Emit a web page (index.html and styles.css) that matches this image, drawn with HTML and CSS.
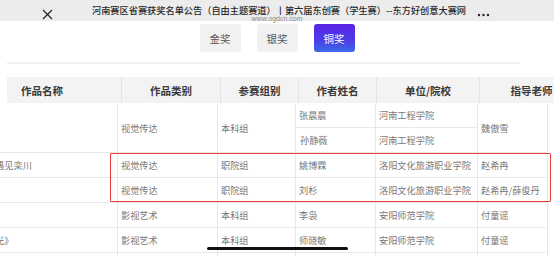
FILE: index.html
```html
<!DOCTYPE html>
<html lang="zh-CN">
<head>
<meta charset="utf-8">
<title>获奖名单</title>
<link rel="stylesheet" href="styles.css">
</head>
<body>
<header class="topbar">
  <span class="close">
    <svg width="11" height="11" viewBox="0 0 11 11"><path d="M1 1L10 10M10 1L1 10" stroke="#222" stroke-width="1.2" fill="none"/></svg>
  </span>
  <h1 class="title">河南赛区省赛获奖名单公告（自由主题赛道）丨第六届东创赛（学生赛）--东方好创意大赛网</h1>
  <span class="more">
    <svg width="13" height="4" viewBox="0 0 13 4"><circle cx="2" cy="2" r="1.2" fill="#222"/><circle cx="6.5" cy="2" r="1.2" fill="#222"/><circle cx="11" cy="2" r="1.2" fill="#222"/></svg>
  </span>
  <span class="url">www.ogdcn.com</span>
</header>

<nav class="tabs">
  <button class="tab">金奖</button>
  <button class="tab">银奖</button>
  <button class="tab active">铜奖</button>
</nav>
<div class="sep"></div>

<div class="thead">
  <div class="th first">作品名称</div>
  <div class="th">作品类别</div>
  <div class="th">参赛组别</div>
  <div class="th">作者姓名</div>
  <div class="th">单位/院校</div>
  <div class="th">指导老师</div>
</div>

<table class="tbody">
  <colgroup>
    <col class="c-name"><col class="c-type"><col class="c-group"><col class="c-author"><col class="c-school"><col class="c-teacher">
  </colgroup>
  <tr>
    <td rowspan="2">《豫韵》</td>
    <td rowspan="2">视觉传达</td>
    <td rowspan="2">本科组</td>
    <td>张晨晨</td>
    <td>河南工程学院</td>
    <td rowspan="2">魏傲雪</td>
  </tr>
  <tr>
    <td>孙静薇</td>
    <td>河南工程学院</td>
  </tr>
  <tr>
    <td>寻梦伏牛山之遇见栾川</td>
    <td>视觉传达</td>
    <td>职院组</td>
    <td>姚博霖</td>
    <td>洛阳文化旅游职业学院</td>
    <td>赵希冉</td>
  </tr>
  <tr>
    <td>《栾川行》</td>
    <td>视觉传达</td>
    <td>职院组</td>
    <td>刘杉</td>
    <td>洛阳文化旅游职业学院</td>
    <td>赵希冉/薛俊丹</td>
  </tr>
  <tr>
    <td>《家乡的味道》</td>
    <td>影视艺术</td>
    <td>本科组</td>
    <td>李袅</td>
    <td>安阳师范学院</td>
    <td>付童谣</td>
  </tr>
  <tr>
    <td>《中原文化之光》</td>
    <td>影视艺术</td>
    <td>本科组</td>
    <td>师晓敏</td>
    <td>安阳师范学院</td>
    <td>付童谣</td>
  </tr>
  <tr>
    <td>&nbsp;</td><td></td><td></td><td></td><td></td><td></td>
  </tr>
</table>

<div class="highlight"></div>
<div class="home-indicator"></div>
</body>
</html>
```

FILE: styles.css
```css
html, body {
  margin: 0;
  padding: 0;
  width: 554px;
  height: 256px;
  overflow: hidden;
  background: #fff;
  font-family: "Noto Sans CJK SC", "Noto Sans", sans-serif;
}

.topbar {
  position: relative;
  height: 21px;
  background: #ececec;
  display: grid;
  grid-template-columns: 88px 378px 88px;
  align-items: center;
}

.close {
  display: flex;
  margin-left: 42px;
  margin-top: 8px;
}

.title {
  margin: 0;
  font-size: 9.2px;
  font-weight: 500;
  color: #2a2a2a;
  text-align: center;
  white-space: nowrap;
  line-height: 12px;
  margin-top: -2px;
  padding-left: 4px;
}

.more {
  display: flex;
  margin-left: 11px;
  margin-top: 8px;
}

.url {
  position: absolute;
  left: 0;
  right: 0;
  top: 15px;
  text-align: center;
  font-family: "Liberation Sans", sans-serif;
  font-size: 7px;
  line-height: 8px;
  color: #8a8a8a;
}

.tabs {
  display: flex;
  justify-content: center;
  gap: 16px;
  margin-top: 3px;
  padding-left: 0;
}

.tab {
  width: 41px;
  height: 28px;
  border: none;
  border-radius: 3px;
  background: #f1f1f1;
  color: #555;
  font-family: inherit;
  font-size: 10.5px;
  padding: 0;
}

.tab.active {
  background: linear-gradient(180deg, #5b22e4 0%, #4a3fe6 60%, #3c6ae9 100%);
  color: #fff;
}

.sep {
  margin: 10px 0 0 7px;
  width: 513px;
  height: 2px;
  background: #f1f1f1;
}

.thead {
  margin: 13px 0 0 7px;
  height: 26px;
  display: grid;
  grid-template-columns: 114px 99px 78px 78px 103px 104px;
  background: #f3f3f3;
}

.th {
  display: flex;
  align-items: center;
  justify-content: center;
  font-size: 10.5px;
  font-weight: 700;
  color: #3a3a3a;
  border-left: 1px solid #e4e4e4;
  white-space: nowrap;
}

.th.first {
  justify-content: flex-start;
  padding-left: 14px;
  border-left: none;
}

.tbody {
  margin-left: -65px;
  border-collapse: collapse;
  table-layout: fixed;
  width: 612px;
}

.c-name { width: 182px; }
.c-type { width: 100px; }
.c-group { width: 78px; }
.c-author { width: 80px; }
.c-school { width: 102px; }
.c-teacher { width: 70px; }

.tbody td {
  height: 24px;
  padding: 0 0 0 3px;
  border: 1px solid #e8e8e8;
  font-size: 9.2px;
  color: #777;
  white-space: nowrap;
  overflow: hidden;
  vertical-align: middle;
}

.tbody tr:first-child td {
  border-top: none;
}

.tbody td:first-child {
  padding-left: 4px;
}

.highlight {
  position: absolute;
  left: 110px;
  top: 153px;
  width: 439px;
  height: 47px;
  border: 1.5px solid #ef3d3d;
  border-radius: 1px;
}

.home-indicator {
  position: absolute;
  left: 207px;
  top: 247px;
  width: 141px;
  height: 3px;
  border-radius: 2px;
  background: #111;
}
```
